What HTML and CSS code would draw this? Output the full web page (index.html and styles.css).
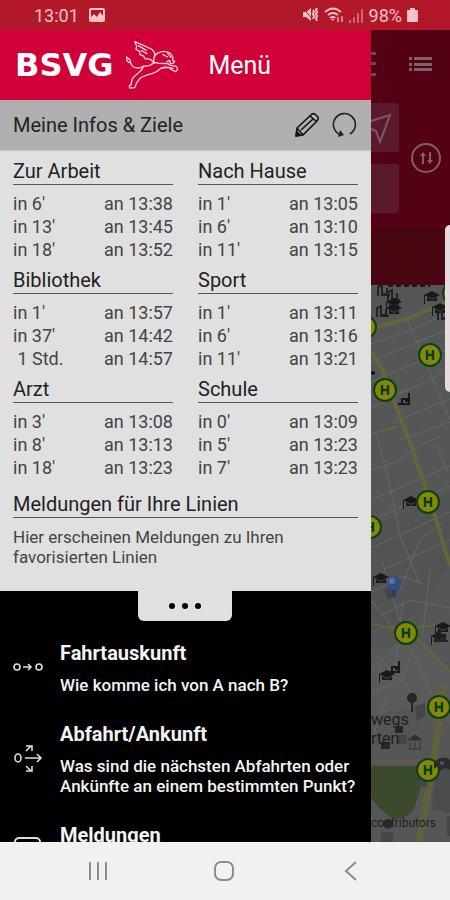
FILE: index.html
```html
<!DOCTYPE html>
<html lang="de">
<head>
    <meta charset="UTF-8">
    <meta name="viewport" content="width=device-width, initial-scale=1.0">
    <title>BSVG Menü</title>
    <link rel="stylesheet" href="styles.css">
</head>
<body>
    <div class="status">
        <span class="clock">13:01</span>
        <svg width="16" height="14" viewBox="0 0 16 14"><rect width="16" height="14" rx="2" fill="#f7c3c6"/><path d="M2 2h12v10H2z" fill="#b2172a"/><path d="M2 12V9l3-3 3 3 3-5 3 4v4z" fill="#f7c3c6"/></svg>
        <div class="status-right">
            <svg width="17" height="16" viewBox="0 0 17 16" fill="none" stroke="#f7c3c6" stroke-width="2"><path d="M1 5h3l5-4v13l-5-4H1z" fill="#f7c3c6" stroke="none"/><path d="M1 1l10 12" stroke="#b2172a" stroke-width="1"/><path d="M11 3l1 2-1 2 1 2-1 3M15 1l-1 2 1 2-1 2 1 2-1 2 1 3"/></svg>
            <svg width="20" height="16" viewBox="0 0 20 16" fill="none" stroke="#f7c3c6" stroke-width="2"><path d="M1 5q8-7 16 0M4 8q5-4 10 0M6 11q3-2 5 0"/><path d="M7 12h3l-1 2z" fill="#f7c3c6" stroke="none"/><path d="M14 10v5M18 9v6" stroke="#dc7d87"/></svg>
            <svg width="15" height="15" viewBox="0 0 15 15" fill="#ce6672"><path d="M0 12h2v3H0zM4 9h2v6H4zM8 5h2v10H8zM12 1h2v14h-2z"/></svg>
            <span class="battery">98%</span>
            <svg width="11" height="14" viewBox="0 0 11 14" fill="#f7c3c6"><path d="M3 0h5v2h2q1 0 1 1v10q0 1-1 1H1q-1 0-1-1V3q0-1 1-1h2z"/></svg>
        </div>
    </div>

    <main class="screen">
        <aside class="drawer">
            <header class="header">
                <span class="logo">BSVG</span>
                <svg class="lion" width="55" height="50" viewBox="375 120 165 150" fill="none" stroke="#fbd0da" stroke-width="4" stroke-linejoin="round" stroke-linecap="round">
                    <path d="M463 190L451 178 435 176 431 168 420 164 419 154 408 148 410 139 404 125 430 136 456 148 465 160 461 180 463 190"/>
                    <path d="M415 137l24 14M424 152l17 9M463 171q7-15 28-17q21 0 27 17v10l6 4-5 6-8-1-2-9-8 4M489 164l14 7M503 160l10 12"/>
                    <path d="M463 187q20 5 39 3l11 7 16 2 4 9-6 7-12-5-6-7q-15-3-25 1-12 12-28 17-23 5-37 15l-9 13-6 14-15 1-1-7 6-3q-1-15 8-24l13-11q12-9 16-21 18 3 32-11"/>
                    <path d="M430 199q-16 9-29 2-11-8-10-20l-11-10 0 9 6 8 6-2M486 204l17-2 17 4"/>
                </svg>
                <h1 class="title">Menü</h1>
            </header>

            <div class="subbar">
                <span class="subtitle">Meine Infos &amp; Ziele</span>
                <button class="tool" aria-label="Bearbeiten">
                    <svg width="26" height="26" viewBox="0 0 26 26" fill="none" stroke="#111" stroke-width="1.6" stroke-linejoin="round"><path d="M2 24l1-8L18 2q2-1 4 1l2 2q1 2-1 4L9 23zM3 16l6 7M16 4l7 6M7 18L19 7"/><path d="M2 24l1-4 3 3z" fill="#111"/></svg>
                </button>
                <button class="tool" aria-label="Aktualisieren">
                    <svg width="26" height="26" viewBox="0 0 26 26" fill="none" stroke="#222" stroke-width="1.6"><path d="M18 22a11 11 0 1 0-9 1"/><path d="M8 18l4 5-6 2z" fill="#222" stroke="none"/></svg>
                </button>
            </div>

            <section class="infos">
                <div class="places">
                    <div class="place">
                        <h2>Zur Arbeit</h2>
                        <table>
                            <tr><td>in 6'</td><td>an 13:38</td></tr>
                            <tr><td>in 13'</td><td>an 13:45</td></tr>
                            <tr><td>in 18'</td><td>an 13:52</td></tr>
                        </table>
                    </div>
                    <div class="place">
                        <h2>Nach Hause</h2>
                        <table>
                            <tr><td>in 1'</td><td>an 13:05</td></tr>
                            <tr><td>in 6'</td><td>an 13:10</td></tr>
                            <tr><td>in 11'</td><td>an 13:15</td></tr>
                        </table>
                    </div>
                    <div class="place">
                        <h2>Bibliothek</h2>
                        <table>
                            <tr><td>in 1'</td><td>an 13:57</td></tr>
                            <tr><td>in 37'</td><td>an 14:42</td></tr>
                            <tr><td>&nbsp;1 Std.</td><td>an 14:57</td></tr>
                        </table>
                    </div>
                    <div class="place">
                        <h2>Sport</h2>
                        <table>
                            <tr><td>in 1'</td><td>an 13:11</td></tr>
                            <tr><td>in 6'</td><td>an 13:16</td></tr>
                            <tr><td>in 11'</td><td>an 13:21</td></tr>
                        </table>
                    </div>
                    <div class="place">
                        <h2>Arzt</h2>
                        <table>
                            <tr><td>in 3'</td><td>an 13:08</td></tr>
                            <tr><td>in 8'</td><td>an 13:13</td></tr>
                            <tr><td>in 18'</td><td>an 13:23</td></tr>
                        </table>
                    </div>
                    <div class="place">
                        <h2>Schule</h2>
                        <table>
                            <tr><td>in 0'</td><td>an 13:09</td></tr>
                            <tr><td>in 5'</td><td>an 13:23</td></tr>
                            <tr><td>in 7'</td><td>an 13:23</td></tr>
                        </table>
                    </div>
                </div>
                <div class="news">
                    <h2>Meldungen für Ihre Linien</h2>
                    <p>Hier erscheinen Meldungen zu Ihren favorisierten Linien</p>
                </div>
            </section>

            <nav class="menu">
                <button class="more" aria-label="Mehr"><i></i><i></i><i></i></button>
                <a class="item" href="#">
                    <svg width="30" height="30" viewBox="0 0 30 30" fill="none" stroke="#ddd" stroke-width="1.6"><circle cx="4" cy="14" r="3"/><circle cx="26" cy="14" r="3"/><path d="M10 14h8M15 11l3 3-3 3"/></svg>
                    <span class="text"><strong>Fahrtauskunft</strong><span>Wie komme ich von A nach B?</span></span>
                </a>
                <a class="item" href="#">
                    <svg width="30" height="30" viewBox="0 0 30 30" fill="none" stroke="#ddd" stroke-width="1.6"><ellipse cx="5" cy="14" rx="3" ry="4"/><path d="M12 14h15M24 10l4 4-4 4M13 7l5-5M13 2h6v5M13 22l5 5M13 27h6v-5"/></svg>
                    <span class="text"><strong>Abfahrt/Ankunft</strong><span>Was sind die nächsten Abfahrten oder Ankünfte an einem bestimmten Punkt?</span></span>
                </a>
                <a class="item" href="#">
                    <svg width="30" height="30" viewBox="0 0 30 30" fill="none" stroke="#ddd" stroke-width="2"><rect x="2" y="3" width="25" height="24" rx="4"/><path d="M7 9h15" stroke-width="4"/></svg>
                    <span class="text"><strong>Meldungen</strong></span>
                </a>
            </nav>
        </aside>

        <div class="behind">
            <div class="search">
                <div class="icons">
                    <svg width="6" height="26" viewBox="0 0 6 26" fill="#6b4b52"><path d="M0 1h5v3H0zM0 11h5v3H0zM0 22h5v3H0z"/></svg>
                    <svg width="24" height="16" viewBox="0 0 24 16" fill="#7d6368"><path d="M0 1h3v3H0zM0 7h3v3H0zM0 12h3v3H0zM5 1h18v3H5zM5 7h18v3H5zM5 12h18v3H5z"/></svg>
                </div>
                <div class="fields">
                    <div class="boxes">
                        <div class="box"><svg width="22" height="32" viewBox="0 0 22 32" fill="none" stroke="#7a5b65" stroke-width="2"><path d="M0 9l19-6-10 27-4-11-5-2"/></svg></div>
                        <div class="box"></div>
                    </div>
                    <svg class="swap" width="32" height="32" viewBox="0 0 32 32" fill="none" stroke="#7d6368" stroke-width="2"><circle cx="16" cy="16" r="14"/><path d="M13 22V11M20 10v11" /><path d="M10 14l3-4 3 4zM17 18l3 4 3-4z" fill="#7d6368" stroke-width="0"/></svg>
                </div>
            </div>
            <div class="band"></div>
            <svg class="map" viewBox="371 285 79 557" preserveAspectRatio="xMidYMid slice">
                <defs>
                    <g id="stop"><circle r="11" fill="#85860a" stroke="#07430d" stroke-width="2"/><path d="M-3-5V5M3-5V5M-3 0H3" stroke="#07400f" stroke-width="2.4" fill="none"/></g>
                    <g id="cap" fill="#17191a"><path d="M0 5l8-4 8 4-8 4z"/><path d="M3 7l5 3 5-3v4H3zM0 5h1v9H0z"/></g>
                    <g id="house" fill="none" stroke="#202224" stroke-width="2"><path d="M0 12V3l4-2v9h5V4M3 11h9"/></g>
                    <g id="bench" fill="none" stroke="#17191a" stroke-width="2"><path d="M0 12h11V1M4 11V7h6M7 9h4"/></g>
                </defs>
                <rect x="371" y="285" width="79" height="557" fill="#555656"/>
                <path d="M371 525l38-13 41-20v70l-30 50-20 12-29 5z" fill="#525353"/>
                <path d="M371 662l30-22 25 4 24 30v50l-30-18-49 10z" fill="#595a5a"/>
                <g fill="none" stroke="#666767" stroke-width="1">
                    <path d="M371 344l35-12 44-20M371 361l79-32M371 382l79-34M371 408l79-38M392 423l58-24M371 470l24-8 24-15M400 440l50-18M371 500l79-34M371 520l79-34M371 548l79-36M387 568l63-28M371 592l32-16 20 8M381 615l30-15 39 8"/>
                    <path d="M406 316l44 104M376 432l12 45 13 61 18 44M390 397l20-9M420 445l20-8M436 443l12 30M371 600l40 50M382 560l22 75M400 590l20-50 22-16M371 665l32 16M403 600l-8 70M371 692l31-11 10-30M402 681l13 16M412 651l22 48M371 740l15-40M430 570l-8 70M371 650l20 20"/>
                </g>
                <g fill="none" stroke="#65643d" stroke-width="4">
                    <path d="M371 328l36-9 43-19"/>
                    <path d="M371 352q16 21 23 49l15 39 23 66 18 60"/>
                    <path d="M371 434l28-8" stroke-width="2"/>
                    <path d="M371 624l28 5 40-4M417 638l33 34" stroke-width="2"/>
                    <path d="M443 685q-5 53-14 100l-10 57" stroke-width="7" stroke="#60603f"/>
                    <path d="M371 762l60-2" stroke="#66593f" stroke-width="2"/>
                </g>
                <path d="M371 766h51q-1 36-13 49l-15 5q-12-8-23-22z" fill="#3b4a2d"/>
                <path d="M436 763h14v50l-18-4z" fill="#4b4c4d"/>
                <g fill="#444547"><path d="M384 590l9-3 4 9-9 3zM415 706l10-3v13l-8 5zM397 735h10v9h-10zM418 772h9v15h-9zM381 832h12v10h-12zM447 816h3v20h-3z"/></g>
                <g>
                    <use href="#house" x="378" y="284"/><use href="#house" x="388" y="289"/><use href="#cap" x="386" y="297"/>
                    <use href="#house" x="377" y="305"/><use href="#cap" x="386" y="303"/><use href="#cap" x="424" y="290"/>
                    <use href="#cap" x="432" y="302"/><use href="#house" x="438" y="308"/>
                    <path d="M388 286h42" stroke="#17191a" stroke-width="2" stroke-dasharray="5 3"/>
                    <use href="#bench" x="398" y="392"/><use href="#cap" x="403" y="495"/><use href="#cap" x="373" y="572"/>
                    <use href="#cap" x="435" y="621"/><use href="#cap" x="431" y="631"/><use href="#house" x="436" y="630"/>
                    <use href="#cap" x="379" y="669"/><use href="#bench" x="388" y="660"/>
                </g>
                <g>
                    <circle cx="412" cy="698" r="5" fill="#242628"/><path d="M412 702v10" stroke="#242628" stroke-width="2"/>
                    <path d="M408 740l7-5 7 5zM410 742v6M415 742v6M420 742v6M408 749h14" fill="#303234" stroke="#303234"/>
                    <path d="M394 599q-2-10-6-12h12q-4 2-6 12z" fill="#1e3f77"/>
                    <circle cx="394" cy="583" r="7" fill="#344f7e"/><circle cx="392" cy="581" r="3" fill="#5b73a0"/>
                    <circle cx="373" cy="373" r="2" fill="#111"/>
                </g>
                <use href="#stop" x="365" y="327"/>
                <use href="#stop" x="454" y="293"/>
                <use href="#stop" x="430" y="355"/>
                <use href="#stop" x="385" y="390"/>
                <use href="#stop" x="428" y="502"/>
                <use href="#stop" x="370" y="527"/>
                <use href="#stop" x="406" y="633"/>
                <use href="#stop" x="439" y="707"/>
                <use href="#stop" x="428" y="770"/>
                <path d="M434 763q8-9 16-3v10q-6-4-9 1l-3-5-4 3z" fill="#292b2c"/><circle cx="442" cy="763" r="2" fill="#555"/>
                <path d="M395 726h8v7h-8zM381 742h9v7h-9z" fill="#25282a"/>
                <circle cx="388" cy="824" r="5" fill="#2d2f30"/>
                <g class="map-text">
                    <text x="371" y="725">wegs</text>
                    <text x="371" y="744">rten</text>
                    <text class="credit" x="371" y="827">contributors</text>
                </g>
            </svg>
        </div>
        <div class="edge"></div>
    </main>

    <footer class="navbar">
        <button aria-label="Letzte Apps"><svg width="20" height="20" viewBox="0 0 20 20" stroke="#8c8c8c" stroke-width="2"><path d="M2 1v18M10 1v18M18 1v18"/></svg></button>
        <button aria-label="Startseite"><svg width="22" height="22" viewBox="0 0 22 22" fill="none" stroke="#8c8c8c" stroke-width="2"><rect x="2" y="2" width="18" height="18" rx="6"/></svg></button>
        <button aria-label="Zurück"><svg width="20" height="20" viewBox="0 0 20 20" fill="none" stroke="#8c8c8c" stroke-width="2"><path d="M15 1L5 10l10 9"/></svg></button>
    </footer>
</body>
</html>
```
FILE: styles.css
```css
*{
    box-sizing: border-box;
}
body{
    margin: 0;
    height: 100vh;
    display: flex;
    flex-direction: column;
    overflow: hidden;
    font-family: Roboto, sans-serif;
    color: #222;
}
svg{
    display: block;
    flex: none;
}
button{
    border: none;
    background: none;
    padding: 0;
}
h1, h2, p{
    margin: 0;
    font-weight: normal;
}
.status{
    height: 30px;
    padding: 0 32px 0 34px;
    background: #b2172a;
    color: #f7c3c6;
    font-size: 18px;
    display: flex;
    align-items: center;
    gap: 10px;
}
.status-right{
    margin-left: auto;
    display: flex;
    align-items: center;
    gap: 5px;
}
.screen{
    flex: 1;
    min-height: 0;
    display: flex;
    position: relative;
    overflow: hidden;
}
.drawer{
    flex: 0 0 371px;
    display: flex;
    flex-direction: column;
}
.header{
    flex: none;
    height: 70px;
    padding-left: 15px;
    background: #d00039;
    color: #fff;
    display: flex;
    align-items: center;
}
.logo{
    font-family: "DejaVu Sans", sans-serif;
    font-weight: bold;
    font-size: 32px;
}
.lion{
    margin-left: 12px;
}
.title{
    font-size: 25px;
    margin-left: 28px;
}
.subbar{
    flex: none;
    height: 51px;
    padding: 0 13px;
    background: #b0b0b0;
    border-bottom: 1px solid #c2c2c2;
    display: flex;
    align-items: center;
    gap: 12px;
}
.subtitle{
    flex: 1;
    font-size: 20px;
}
.infos{
    flex: none;
    padding: 7px 13px 24px;
    background: #e0e0e0;
}
.places{
    display: grid;
    grid-template-columns: 1fr 1fr;
    gap: 6px 25px;
}
h2{
    font-size: 20px;
    line-height: 26px;
    border-bottom: 1px solid #555;
}
table{
    width: 100%;
    margin-top: 7px;
    border-collapse: collapse;
}
td{
    padding: 0;
    font-size: 18px;
    line-height: 23px;
    color: #444;
}
td:last-child{
    text-align: right;
}
.news{
    margin-top: 12px;
}
.news p{
    margin-top: 9px;
    font-size: 17px;
    line-height: 20px;
    color: #444;
}
.menu{
    flex: 1;
    min-height: 0;
    overflow: hidden;
    padding-left: 13px;
    background: #000;
    display: flex;
    flex-direction: column;
    gap: 26px;
}
.more{
    flex: none;
    align-self: center;
    width: 94px;
    height: 30px;
    margin: 0 14px -7px 0;
    background: #e0e0e0;
    border-radius: 0 0 6px 6px;
    display: flex;
    align-items: center;
    justify-content: center;
    gap: 7px;
}
.more i{
    width: 6px;
    height: 6px;
    border-radius: 50%;
    background: #000;
}
.item{
    flex: none;
    min-height: 55px;
    display: flex;
    align-items: center;
    gap: 17px;
    color: #f4f4f4;
    text-decoration: none;
}
.text{
    align-self: flex-start;
    display: flex;
    flex-direction: column;
    gap: 9px;
    font-size: 17px;
    font-weight: 500;
    line-height: 20px;
}
.text strong{
    font-size: 20px;
    line-height: 26px;
}
.behind{
    flex: 1;
    min-width: 0;
    display: flex;
    flex-direction: column;
}
.search{
    flex: none;
    height: 198px;
    background: #540015;
}
.icons{
    height: 73px;
    padding: 0 17px 5px 0;
    display: flex;
    align-items: center;
    justify-content: space-between;
}
.fields{
    padding-right: 8px;
    display: flex;
    align-items: center;
    justify-content: space-between;
}
.boxes{
    display: grid;
    gap: 12px;
}
.box{
    width: 28px;
    height: 49px;
    background: #5b1a2c;
    border-radius: 0 3px 3px 0;
    display: flex;
    align-items: center;
}
.band{
    flex: none;
    height: 57px;
    background: #480710;
}
.map{
    flex: 1;
    min-height: 0;
    width: 100%;
}
.map-text{
    font-size: 16px;
    fill: #1d1f20;
}
.credit{
    font-size: 12px;
}
/* edge panel handle lying over the app */
.edge{
    position: absolute;
    top: 195px;
    right: 0;
    width: 5px;
    height: 167px;
    background: #e6dcdd;
    border-radius: 5px 0 0 5px;
}
.navbar{
    flex: none;
    height: 58px;
    padding: 0 36px 0 35px;
    background: #f1f1f1;
    display: flex;
    align-items: center;
}
.navbar button{
    flex: 1;
    display: flex;
    justify-content: center;
}
```
